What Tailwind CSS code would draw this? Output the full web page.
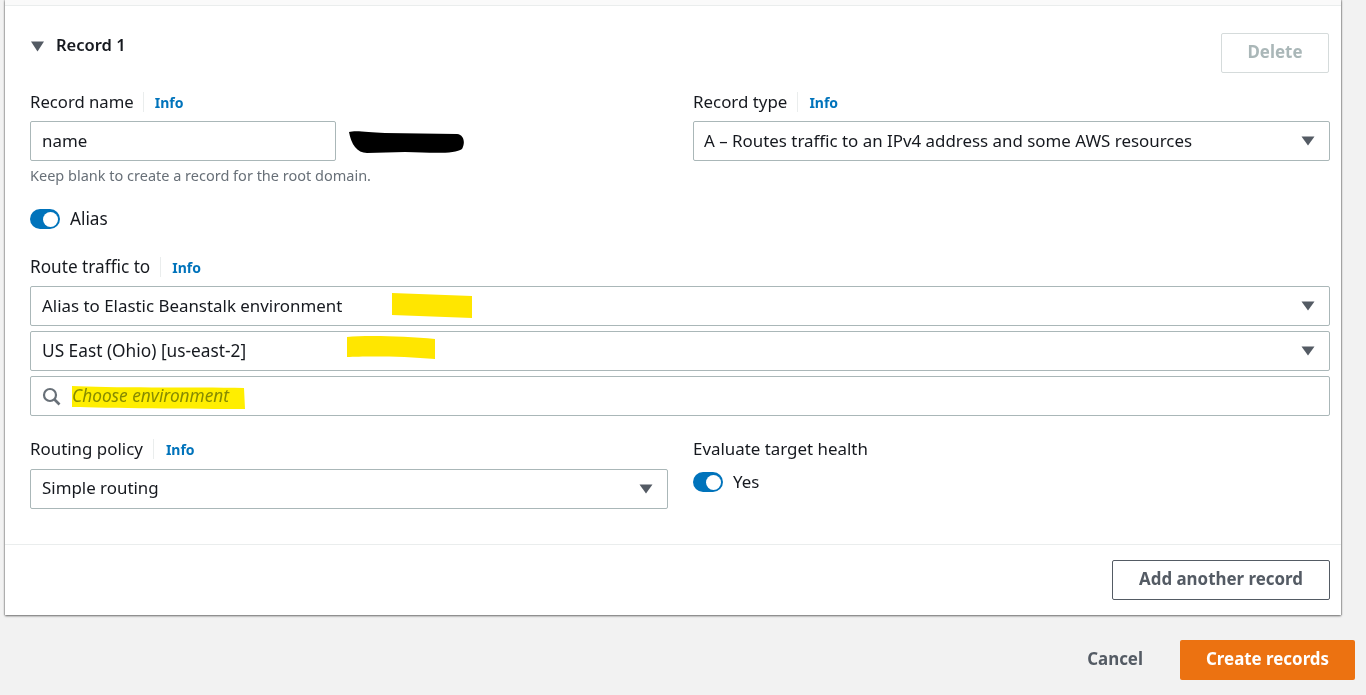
<!DOCTYPE html>
<html lang="en">
<head>
  <meta charset="UTF-8">
  <meta name="viewport" content="width=device-width, initial-scale=1.0">
  <title>Create records</title>
  <script src="https://cdn.jsdelivr.net/npm/@tailwindcss/browser@4"></script>
</head>
<body class="bg-[#f2f2f2] h-[695px] overflow-hidden font-['Noto_Sans',sans-serif] text-[#16191f] text-[16.9px] leading-[22px]">
  <!-- Card -->
  <div class="ml-[5px] w-[1336px] h-[615px] bg-white shadow-[0_1px_2px_rgba(0,0,0,0.55),-1px_0_1px_rgba(0,0,0,0.12),1px_0_1px_rgba(0,0,0,0.18)] flex flex-col">
    <div class="h-[6px] bg-[#fafafa] border-b border-[#eaeded]"></div>

    <div class="h-[538px] pl-[25px] pr-[11px] relative">
      <!-- Record header -->
      <div class="flex justify-between items-start h-[76px]">
        <div class="flex items-center gap-[11px] mt-[28px]">
          <svg class="w-[15px] h-[11px] mt-[2px]" viewBox="0 0 15 11"><path d="M1 0.5h13L7.5 10.5z" fill="#545b64"/></svg>
          <span class="font-semibold text-[16.5px]">Record 1</span>
        </div>
        <button class="mt-[27px] mr-[1px] w-[108px] h-[40px] pb-[2px] border border-[#d5dbdb] rounded-[2px] text-[#aab7b8] font-bold">Delete</button>
      </div>

      <div class="grid grid-cols-[638px_637px] gap-x-[25px]">
        <div>
          <div class="flex items-center h-[22px] mt-[9px]">
            <span class="text-[16.7px]">Record name</span>
            <span class="h-[20px] border-l border-[#eaeded] ml-[9px] pl-[11px] text-[14px] font-bold text-[#0073bb]">Info</span>
          </div>
          <div class="mt-[8px] w-[306px] h-[40px] border border-[#aab7b8] rounded-[2px] flex items-center pl-[11px]">name</div>
          <p class="text-[14.5px] text-[#687078] mt-[3px]">Keep blank to create a record for the root domain.</p>
        </div>
        <div>
          <div class="flex items-center h-[22px] mt-[9px]">
            <span>Record type</span>
            <span class="h-[20px] border-l border-[#eaeded] ml-[10px] pl-[11px] text-[14px] font-bold text-[#0073bb]">Info</span>
          </div>
          <div class="mt-[8px] h-[40px] border border-[#aab7b8] rounded-[2px] flex items-center justify-between pl-[10px] pr-[14px]">
            <span>A – Routes traffic to an IPv4 address and some AWS resources</span>
            <svg class="w-[14px] h-[10px]" viewBox="0 0 14 10"><path d="M0.5 0.5h13L7 9.5z" fill="#545b64"/></svg>
          </div>
        </div>
      </div>

      <!-- Alias toggle -->
      <div class="flex items-center gap-[10px] mt-[22px] h-[22px]">
        <div class="w-[30px] h-[20px] rounded-full bg-[#0073bb] flex items-center justify-end pr-[2.5px]"><div class="w-[15px] h-[15px] rounded-full bg-white"></div></div>
        <span class="text-[17.2px]">Alias</span>
      </div>

      <!-- Route traffic to -->
      <div class="flex items-center h-[22px] mt-[26px]">
        <span class="text-[17.2px]">Route traffic to</span>
        <span class="h-[20px] border-l border-[#eaeded] ml-[10px] pl-[11px] text-[14px] font-bold text-[#0073bb]">Info</span>
      </div>
      <div class="mt-[8px] flex flex-col gap-[5px]">
        <div class="h-[40px] border border-[#aab7b8] rounded-[2px] flex items-center justify-between pl-[11px] pr-[14px]">
          <span>Alias to Elastic Beanstalk environment</span>
          <svg class="w-[14px] h-[10px]" viewBox="0 0 14 10"><path d="M0.5 0.5h13L7 9.5z" fill="#545b64"/></svg>
        </div>
        <div class="h-[40px] border border-[#aab7b8] rounded-[2px] flex items-center justify-between pl-[11px] pr-[14px]">
          <span class="text-[17.3px]">US East (Ohio) [us-east-2]</span>
          <svg class="w-[14px] h-[10px]" viewBox="0 0 14 10"><path d="M0.5 0.5h13L7 9.5z" fill="#545b64"/></svg>
        </div>
        <div class="h-[40px] border border-[#aab7b8] rounded-[2px] flex items-center pl-[11px] gap-[11px]">
          <svg class="w-[19px] h-[19px]" viewBox="0 0 19 19" fill="none" stroke="#687078" stroke-width="2.2"><circle cx="8" cy="8" r="6"/><path d="M12.5 12.5L17.5 17.5" stroke-width="2.6"/></svg>
          <span class="italic text-[17.3px] text-[#879596]">Choose environment</span>
        </div>
      </div>

      <!-- Routing policy / target health -->
      <div class="grid grid-cols-[638px_637px] gap-x-[25px] mt-[22px]">
        <div>
          <div class="flex items-center h-[22px]">
            <span>Routing policy</span>
            <span class="h-[20px] border-l border-[#eaeded] ml-[10px] pl-[12px] text-[14px] font-bold text-[#0073bb]">Info</span>
          </div>
          <div class="mt-[9px] h-[40px] pb-[2px] border border-[#aab7b8] rounded-[2px] flex items-center justify-between pl-[11px] pr-[14px]">
            <span>Simple routing</span>
            <svg class="w-[14px] h-[10px] mt-[2px]" viewBox="0 0 14 10"><path d="M0.5 0.5h13L7 9.5z" fill="#545b64"/></svg>
          </div>
        </div>
        <div>
          <div class="h-[22px]">Evaluate target health</div>
          <div class="flex items-center gap-[10px] mt-[11px] h-[22px]">
            <div class="w-[30px] h-[20px] rounded-full bg-[#0073bb] flex items-center justify-end pr-[2.5px]"><div class="w-[15px] h-[15px] rounded-full bg-white"></div></div>
            <span>Yes</span>
          </div>
        </div>
      </div>

      <!-- Marker scribbles drawn over the form -->
      <svg class="absolute left-0 top-0 w-[1336px] h-[538px] pointer-events-none mix-blend-multiply" viewBox="0 0 1336 538">
        <path d="M344 126 C350 124 362 126 380 127 L452 128 C460 129 460 138 457 143 C450 148 430 147 400 146 L362 147 C352 147 346 138 344 126z" fill="#000"/>
        <path d="M387 287 L467 290 L467 312 L387 309z" fill="#ffe600"/>
        <path d="M342 331 C360 329 400 330 430 333 L430 353 C400 350 360 350 342 351z" fill="#ffe600"/>
        <path d="M67 380 C100 382 190 381 239 382 L240 403 C190 403 100 402 67 401z" fill="#ffee00"/>
      </svg>
    </div>

    <!-- Card footer -->
    <div class="border-t border-[#eaeded] h-[71px] pt-[15px] pr-[11px] flex justify-end">
      <button class="w-[218px] h-[40px] pb-[2px] border border-[#545b64] rounded-[2px] text-[#545b64] font-bold">Add another record</button>
    </div>
  </div>

  <!-- Page actions -->
  <div class="flex justify-end items-center gap-[37px] mt-[25px] pr-[11px]">
    <span class="font-bold text-[#545b64] pb-[2px]">Cancel</span>
    <button class="w-[175px] h-[40px] pb-[2px] bg-[#ec7211] rounded-[2px] text-white font-bold">Create records</button>
  </div>
</body>
</html>
